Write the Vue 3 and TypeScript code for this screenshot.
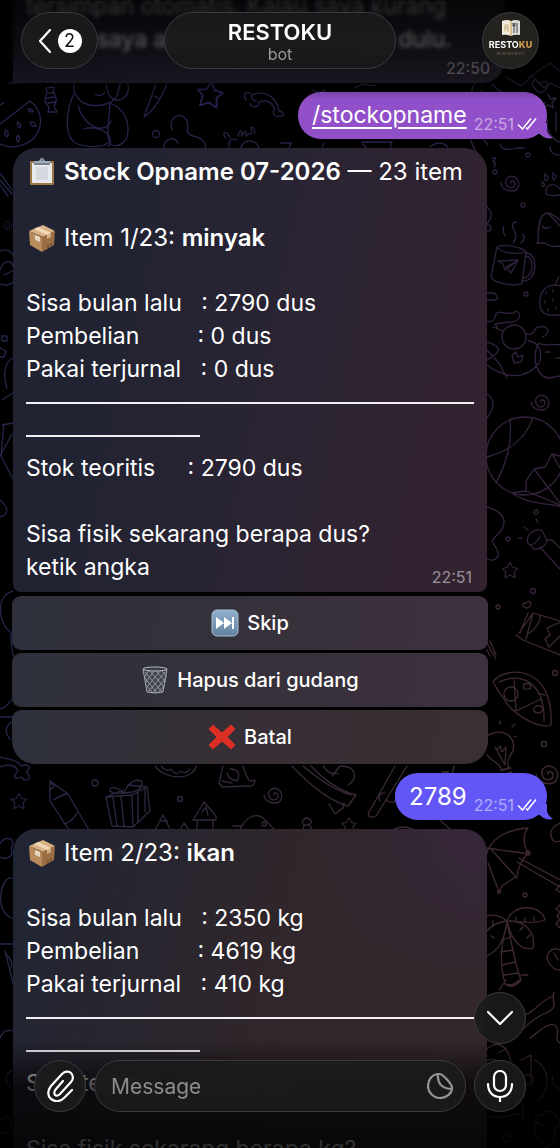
<script setup lang="ts">
import { ref } from 'vue'

interface StockRow {
  label: string
  value: string
}

interface StockItem {
  position: string
  name: string
  rows: StockRow[]
  theory: StockRow
  question: string
}

const first: StockItem = {
  position: 'Item 1/23: ',
  name: 'minyak',
  rows: [
    { label: 'Sisa bulan lalu   ', value: ': 2790 dus' },
    { label: 'Pembelian         ', value: ': 0 dus' },
    { label: 'Pakai terjurnal   ', value: ': 0 dus' },
  ],
  theory: { label: 'Stok teoritis     ', value: ': 2790 dus' },
  question: 'Sisa fisik sekarang berapa dus?',
}

const second: StockItem = {
  position: 'Item 2/23: ',
  name: 'ikan',
  rows: [
    { label: 'Sisa bulan lalu   ', value: ': 2350 kg' },
    { label: 'Pembelian         ', value: ': 4619 kg' },
    { label: 'Pakai terjurnal   ', value: ': 410 kg' },
  ],
  theory: { label: 'Stok teoritis     ', value: ': 6559 kg' },
  question: 'Sisa fisik sekarang berapa kg?',
}

const draft = ref('')
</script>

<template>
  <div class="screen">
    <svg class="doodles" viewBox="0 0 560 1148" preserveAspectRatio="xMidYMin slice" aria-hidden="true">
      <defs>
        <linearGradient id="ink" gradientUnits="userSpaceOnUse" x1="0" y1="100" x2="560" y2="500">
          <stop offset="0" stop-color="#25234f" />
          <stop offset=".55" stop-color="#2b2040" />
          <stop offset="1" stop-color="#36223c" />
        </linearGradient>
        <linearGradient id="inkLow" gradientUnits="userSpaceOnUse" x1="0" y1="800" x2="560" y2="900">
          <stop offset="0" stop-color="#24264a" />
          <stop offset=".4" stop-color="#35283a" />
          <stop offset="1" stop-color="#40282f" />
        </linearGradient>
        <path id="star" d="M0-9 3-3 9-2 5 2 6 9 0 6-6 9-5 2-9-2-3-3Z" />
        <path id="spiral" d="M1 0c-2-3 4-3 4 1s-7 6-9 0 5-10 10-6 3 13-4 13-11-4-11-8" />
      </defs>
      <g fill="none" stroke="url(#ink)" stroke-width="1.3" stroke-linecap="round" stroke-linejoin="round">
        <path d="M0 124 30 101c8 6 12 14 10 25-4 18-24 25-40 18M28 109q5 0 5 3-5 0-5-3M18 122q4 3 2 6-4-2-2-6M30 122q5-1 6 4-5 1-6-4M6 130q4 3 1 7-4-3-1-7M18 135q3 4 0 7-3-3 0-7M0 105q6-4 2-1" />
        <path d="M46 88l8-1-1 5q6 7 1 14l3 6h-9l1-5q-7-6-2-14zM48 93h6M47 98l8-1M48 103l7-1" />
        <path d="M74 84c-2 8 4 18 15 21 14 2 27-2 29-13l2-8M74 94c-8 16-10 40 0 48 10 6 26 6 34 1M84 129c12-4 24 3 26 9s0 7-2 8M110 103c12 5 18 14 18 27s-9 17-16 15-3-24-2-42M95 94q6 4 10-2M106 84c2 16 10 18 16 15q8-4 6-15M78 106c6 20 26 30 33 15" />
        <path d="M156 84l-12 33c8-5 16-16 23-33M154 96l4 2" />
        <use href="#star" stroke="#262150" transform="translate(210 94) rotate(8) scale(1.4)" />
        <path d="M246 100c-5-7 2-10 6-5 14-6 25 3 27 16 6 1 6 6 0 5-6 2-7-5-4-6-3-8-8-11-16-8 0 5-6 7-9 2M252 95q-1 5 4 6" />
        <circle cx="156" cy="134" r="3.5" />
        <path d="M164 148c0-10 10-12 14-5M172 130c-4-12 7-18 13-12 8 8-4 14 8 18 10 2 14 8 12 12M226 138c-6-6 2-8 4 0M229 147c-1-8 4-9 8-7M238 136q3-10 4 0 4-9 4 0 3-3 4-2 3 0 1-6 3-3 4 5M241 148c2-10 15-9 18 0" />
        <path d="M313 90q6 5 12 0M355 88c10-8 14 0 20-3M475 82c-10 20 0 40 10 56M482 90c-7 12 0 22 6 30M492 84c10 12 20 12 36 10M506 77l15 9 11-10 12 12 7-5 9 5M540 84c-7-9-13 1 0 9 12-4 9-17 0-9M548 94l2 5 6-1-4 5 1 5-5-3-5 3 2-6M530 77l20-14 10 8M548 120c-4 7 4 20 12 22M556 113v18" />
        <path d="M280 143h11l-2 5M324 143l-2 5M362 142h30l-2 6M363 144l3 4M430 147q10-8 18 0M500 144q2 8 16 4h8M550 147q0 8 10 8" />
        <circle cx="528" cy="155" r="2" /><circle cx="495" cy="172" r="2" /><circle cx="523" cy="205" r="2" />
        <path d="M471 140q2 10 12 20M484 140l4 5M492 158h4l-3 4q4 1 1 5" />
        <use href="#spiral" stroke="#33203f" transform="translate(510 183)" />
        <path d="M547 187c5-5 12-1 13 2M547 187c-4 8 1 10 13 8M542 182q4 2 2 4t-2-4M545 174q5 3 2 6t-2-6M553 173q5 3 2 6t-2-6" />
        <path d="M538 242c0-14 1-28 9-29 6 0 8 4 13 7M536 243h9c5 4 10 4 15 3M542 226q3 4 8 1M548 213l12 13" />
        <path d="M487 207c8 7 3 13 0 17 6 2 5 8 0 7" />
        <path d="M497 247c5-4 25 0 29 5l-4 31c-5 4-28 1-31-6zM497 247c4 6 21 8 29 5M526 256c10 2 7 22-3 22M526 253c13 0 12 29-4 28M498 261l20-1-7 13-5-6 11-6-12 9-2-6z" />
        <path d="M505 236q-3-5-1-10M513 243q5-6 1-13t2-8M521 243q5-4 2-9M487 293h7q7 6 0 7h-7" />
        <circle cx="526" cy="294" r="2" />
        <path d="M560 286c-10-3-17 1-20 12-2 11 3 18 13 17h7M546 292v2M553 290v2M545 301v2M553 299v2M548 309v2M556 307v2M555 285l4-8" />
        <circle cx="514" cy="337" r="12" />
        <path d="M487 321c6 2 8-2 9-7s17 3 20-3c8 3 2 12-7 11l-14 2 3 5M493 327l10 4M487 342c7 2 14 5 10 11-5 3-8 6-10 7M487 365c20 15 40 14 52-2 5-12-2-22-11-22M526 334c10 2 7-6 12-7 12-2 12 6 5 10M539 343c-8 13-3 34 10 35l11-2M539 343c5 4 13 0 21 2M545 352h5M556 358h4M512 355l4-3 2 5 5-2-2 7-7 1zM487 350l12 13 8 15" />
        <use href="#spiral" stroke="#36223c" transform="translate(540 402)" />
        <path d="M487 394q12 8 0 24" />
        <circle cx="525" cy="456" r="39" />
        <path d="M510 419c2 20-2 42-14 64M533 418c-8 22-24 33-46 39M512 493l14-2 0-10 8-12 11-2 7-13 8 2M526 491l34 14M534 469l26 34M552 454l8 14M512 493c10 8 24 10 48 13" />
        <circle cx="536" cy="512" r="2" /><circle cx="508" cy="539" r="2" /><circle cx="533" cy="591" r="2.5" />
        <path d="M487 507c19 5 21 17 11 27-10 9-4 8-1 16 4 8-3 12-10 9M528 543c-3-7 7-16 14-12l5 9c-1 6-8 10-13 9zM531 545q6-2 9-9M540 547l20 22M547 540c8-1 9 6 13 8M524 527l4 3M536 519l2 4M519 538h3" />
        <use href="#star" stroke="#36223c" transform="translate(510 570) scale(.85)" />
      </g>
      <g fill="none" stroke="url(#inkLow)" stroke-width="1.3" stroke-linecap="round" stroke-linejoin="round">
        <circle cx="498" cy="607" r="2" /><circle cx="555" cy="673" r="2.5" /><circle cx="544" cy="744" r="2.5" />
        <path d="M526 603c5-5 7 3 1 5-6-1-5-5-1-5M519 633l14-20 27 8M516 635l7 5 37 15M528 613l-8 20M533 613l-7 26M540 615c1 8-7 16-12 19M560 622l-13 6 3 7-5 4 4 8 11-11M487 643l9 16M490 641l6 14M487 650l3 6" />
        <path d="M493 682c11-16 61-19 58 43-10 4-32-7-43-20-6-9-10-14-15-23zM499 682c22-10 46 0 45 39M514 679l2 32 25-12M524 684q7-2 7 4-9 4-7-4M536 706c10-2 7 8 2 7-6-1-5-5-2-7M538 693l7 2" />
        <circle cx="511" cy="694" r="7" />
        <path d="M487 736c18-12 34 6 23 20-4 6-2 9-1 12l-8 2c0-7-9-8-14-15M495 747l10 18 1-18-4 5-2-6-3 4M503 770l8-2M502 775l9-3q1 5-4 8l-4-3M500 724v-3M512 727l3-3M514 737l3-1" />
        <use href="#spiral" stroke="#3c2730" transform="translate(547 774) scale(1.2)" />
        <path d="M0 757c8 2 18 3 21 9 8-3 11 2 5 6 7 6 1 12-5 5-6 3-9 0-3-6-3-7-11-7-18-4" />
        <use href="#star" stroke="#252648" transform="translate(19 801) scale(.85)" />
        <path d="M50 781l18 13 21 36M50 781v20l19 29M51 789l5-4M53 800c6-3 10-6 15-6M64 824c5-1 9-4 13-11M50 781l3 4" />
        <circle cx="95" cy="783" r="3" /><circle cx="180" cy="799" r="2.5" />
        <path d="M106 797l26-2 15-8 3 24-17 16-21-1zM132 795l1 31M113 798l4 28M121 797l3 29M138 793v29M145 789v23M124 793c-9 1-16-1-14-4s9-1 14 4c5-14 15-14 18-11 1 8-7 10-18 11M106 797l17-7M128 785l19 2" />
        <path d="M155 766c10 14 38 15 41 0M161 766q6 7 10 3 5 8 9 2 6 4 10-2M223 766l-4 17 3 4 25-1q8 1 8-6-6 3-8-3l-4-11M230 769c8 0 11 5 7 12-5-1-9-3-10-8M222 781l10 2" />
        <use href="#spiral" stroke="#36283a" transform="translate(273 795)" />
        <path d="M195 817l9-15 12 14v4h-23zM197 821v10M213 821v10M202 812l4-5 2 8M155 830l8-15 8 16M160 821h8M180 830l4-7 5 7M240 830c5-13 17-19 25-10l11 11M241 826h-8" />
        <circle cx="264" cy="824" r="2" />
        <path d="M292 766c17 18 37 35 56 40l8-11c-16-4-32-15-45-29M303 766c14 12 31 24 48 29M329 804l6 10 8-6 1-5M323 766c5 7 10 9 15 7M341 766c16 0 17 14 7 19M332 776l8-10M407 766l-31 50q-6 3-8-2l27-48M386 800q12 8 10-10M385 792q-9 3-5 9M454 766l-2 9M442 772h6v5" />
        <path d="M302 822q5-8 10 0l-4 3h-4zM304 825l-1 6M310 825l2 6M392 831q10-8 24 0M440 820l12 11" />
        <use href="#star" stroke="#3a2833" transform="translate(349 825) scale(.8)" />
        <path d="M560 823q-11 5-9 13t9 5M487 853c3-12 16-23 41-25-7 9-4 18 1 26l-42-6M490 848l27 30M488 863l11 29 3-6 15-10q2-14 11-23M517 862l43 25M519 858l41 22M560 885l-4 5 4 2" />
        <circle cx="499" cy="892" r="1.5" /><circle cx="525" cy="895" r="2" /><circle cx="528" cy="853" r="2" />
        <path d="M487 916c7-2 15 0 20 5 5-17 34-18 38-1-11 4-24 2-36 1 17 0 27 12 24 27-9 3-21-4-26-27-8 1-16 5-20 10M487 956c11-5 18-16 20-35M506 927c-6 22-6 38-1 57q8 6 16-4c-6-15-9-36-13-53M502 940l9-3M501 952l12-2M502 965l14-3M504 975l15-2M507 984q5 3 12-4M499 990l7-10M521 975h7M516 917v4M525 918v4M534 917v4M520 930l3-3M527 938l3-3M493 921v4M491 936l3 2" />
        <path d="M560 950c-9-4-16 5-11 13s9 7 11 7M554 953l4 7M560 905l-4 4 4 3-3 4 3 3-4 5 4 4" />
        <path d="M554 992c-3 12 5 14-6 20-13 5-21 13-30 22M530 1038c11-8 19-17 26-12 5 8-3 13 4 17M515 1018c18-2 24-17 38-22M487 1049c13-11 22 0 24 14M498 1053l8-4M487 1060c15-2 20 6 14 16M521 1060l10-5v28M535 1060c14 8 17 28 3 41M519 1098l4 8v13M490 1116c10 5 22-3 28-2M553 1076q-4 8 7 13" />
        <circle cx="507" cy="1138" r="4" /><circle cx="528" cy="1080" r="5" />
        <path d="M544 1125c-10 2-12-12-1-10 3-6 14-4 13 2 6 2 5 11-2 11 3 10-2 20-10 20M538 1122c-6 5-4 19 6 21" />
        <path d="M0 173l12 17M0 180l12 14M0 185l8 11" />
        <use href="#spiral" stroke="#25234f" transform="translate(7 225) scale(.55)" />
        <path d="M0 251c6-3 12 0 14 6M0 270c5-12 12-9 13-4M0 284c5 2 10 1 13-2M4 275l8-4M2 336h5v5H2zM2 400l11-7M0 348l6 3-2 6H0M13 358c-9 4-10 18-6 30M2 425l11-2M4 424l-3 32 12 23M12 434L0 456M0 500c9 8 9 14 0 17M13 591c-18 5-15 32-2 42 0 9 1 22 4 25M0 709c7-1 9-8 13-10M0 717h13M11 722q-9 8-1 17M0 843c8-9 17-3 11 5 4 10-7 12-11 9M12 878c-12-2-18 34 0 40M0 944h13M5 951l8 32M7 955q7 8 4 12M0 1038q4-10 12-7M12 1070q-11 7-2 17M0 1121q11-10 11 3t-11 8" />
      </g>
      <path d="M13 77q0 5-7 6 8 3 13 0" fill="#171622" />
    </svg>

    <main class="thread">
      <article class="bubble incoming previous">
        <p class="line">tersimpan otomatis. Kalau saya kurang</p>
        <p class="line">yakin, saya akan minta konfirmasi dulu.</p>
        <time class="stamp">22:50</time>
      </article>

      <article class="bubble outgoing violet">
        <a class="command" href="#stockopname">/stockopname</a>
        <time>22:51</time>
        <svg class="ticks" viewBox="0 0 20 13" aria-hidden="true"><path d="M1 7.500 5.500 12 14 1.500M9 10.500 10.500 12 19 1.500" /></svg>
        <svg class="tail" viewBox="0 0 18 16" aria-hidden="true"><path d="M12 0v6c0 4 3 7 6 9-5 1-9 0-12-3L0 8V0Z" /></svg>
      </article>

      <article class="bubble incoming card">
        <p class="line heading">
          <svg class="emoji" viewBox="0 0 28 28" aria-hidden="true">
            <rect x="2" y="3" width="24" height="24" rx="1" fill="#9b7849" />
            <path d="M4 5h20v20H4z" fill="#e8e9ed" />
            <path d="M8 9h12v13H8z" fill="#d5d8de" />
            <path d="M6 6V3h5q1-3 3-3t3 3h5v3z" fill="#a3adba" />
            <path d="M6 5h16v2H6z" fill="#778492" /><circle cx="14" cy="2" r="1" fill="#53606d" />
          </svg>
          <span><strong>Stock Opname 07-2026</strong> — 23 item</span>
        </p>
        <p class="line"></p>
        <p class="line heading">
          <svg class="emoji" viewBox="0 0 28 28" aria-hidden="true">
            <path d="M1 7 15 1l12 6-12 6Z" fill="#d9b184" /><path d="M1 7l13 6v15L2 21Z" fill="#b98b5c" /><path d="M14 13l13-6-1 14-12 7Z" fill="#9a6d42" />
            <path d="M6 5l4-2 13 6-4 2Z" fill="#f0d8b6" /><path d="M19 11l4-2v4l-4 2Z" fill="#d5af82" /><path d="M7 11l5 2v5l-5-2Z" fill="#e7d7c3" /><path d="M20 21v3M23 19v3" stroke="#5d4029" />
          </svg>
          <span>{{ first.position }}<strong>{{ first.name }}</strong></span>
        </p>
        <p class="line"></p>
        <p v-for="row in first.rows" :key="row.label" class="line">{{ row.label }}{{ row.value }}</p>
        <hr class="rule">
        <hr class="rule short">
        <p class="line">{{ first.theory.label }}{{ first.theory.value }}</p>
        <p class="line"></p>
        <p class="line">{{ first.question }}</p>
        <p class="line">ketik angka</p>
        <time class="stamp">22:51</time>
      </article>

      <div class="actions">
        <button type="button">
          <svg class="emoji" viewBox="0 0 28 28" aria-hidden="true">
            <defs><linearGradient id="skip" x2="0" y2="1"><stop stop-color="#91b0cc" /><stop offset="1" stop-color="#61819f" /></linearGradient></defs>
            <rect x="1" y="1" width="26" height="26" rx="5" fill="url(#skip)" stroke="#a9c0d5" />
            <path d="M5 8l8 6-8 6ZM13 8l8 6-8 6ZM21 8h2v12h-2Z" fill="#fff" />
          </svg>
          <span>Skip</span>
        </button>
        <button type="button">
          <svg class="emoji" viewBox="0 0 28 28" aria-hidden="true">
            <path d="M2 3h24l-4 23q-8 3-16 0Z" fill="#41444a" />
            <path d="M4 6l17 20M8 4l15 17M14 4l11 12M20 4l6 7M4 12l12 15M6 20l6 7M24 6L7 26M20 4L6 21M14 4L5 16M8 4l-4 7M25 12L12 27M23 20l-6 7" fill="none" stroke="#9a9fa6" stroke-width=".9" />
            <ellipse cx="14" cy="3" rx="12" ry="2" fill="#393c42" stroke="#b7bbc0" /><path d="M6 26q8 2 16 0M2 3l4 23M26 3l-4 23" fill="none" stroke="#a5aab0" />
          </svg>
          <span>Hapus dari gudang</span>
        </button>
        <button type="button">
          <svg class="emoji" viewBox="0 0 28 28" aria-hidden="true"><path d="M5 2 14 10 23 2l4 4-8 8 8 8-4 4-9-8-9 8-4-4 8-8-8-8Z" fill="#dc2f24" stroke="#dc2f24" stroke-linejoin="round" /></svg>
          <span>Batal</span>
        </button>
      </div>

      <article class="bubble outgoing indigo">
        <span>2789</span>
        <time>22:51</time>
        <svg class="ticks" viewBox="0 0 20 13" aria-hidden="true"><path d="M1 7.500 5.500 12 14 1.500M9 10.500 10.500 12 19 1.500" /></svg>
        <svg class="tail" viewBox="0 0 18 16" aria-hidden="true"><path d="M12 0v6c0 4 3 7 6 9-5 1-9 0-12-3L0 8V0Z" /></svg>
      </article>

      <article class="bubble incoming card warm">
        <p class="line heading">
          <svg class="emoji" viewBox="0 0 28 28" aria-hidden="true">
            <path d="M1 7 15 1l12 6-12 6Z" fill="#d9b184" /><path d="M1 7l13 6v15L2 21Z" fill="#b98b5c" /><path d="M14 13l13-6-1 14-12 7Z" fill="#9a6d42" />
            <path d="M6 5l4-2 13 6-4 2Z" fill="#f0d8b6" /><path d="M19 11l4-2v4l-4 2Z" fill="#d5af82" /><path d="M7 11l5 2v5l-5-2Z" fill="#e7d7c3" /><path d="M20 21v3M23 19v3" stroke="#5d4029" />
          </svg>
          <span>{{ second.position }}<strong>{{ second.name }}</strong></span>
        </p>
        <p class="line"></p>
        <p v-for="row in second.rows" :key="row.label" class="line">{{ row.label }}{{ row.value }}</p>
        <hr class="rule">
        <hr class="rule short">
        <p class="line">{{ second.theory.label }}{{ second.theory.value }}</p>
        <p class="line"></p>
        <p class="line">{{ second.question }}</p>
        <p class="line">ketik angka</p>
      </article>
    </main>

    <header class="topbar">
      <button type="button" class="glass back" aria-label="Back, 2 unread">
        <svg viewBox="0 0 14 26" aria-hidden="true"><path d="M12 2 2 13l10 11" /></svg>
        <span class="count">2</span>
      </button>
      <button type="button" class="glass title">
        <span class="name">RESTOKU</span>
        <span class="kind">bot</span>
      </button>
      <button type="button" class="glass avatar" aria-label="Profile">
        <svg class="menu" viewBox="0 0 20 18" aria-hidden="true">
          <path d="M1 2q5-2 9 0v15q-5-2-9-1Z" fill="#f4ead5" /><path d="M10 2q5-2 9 0v14q-5-1-9 1Z" fill="#dcdcda" />
          <path d="M10 2v15" stroke="#cc9c4c" /><path d="M4 6v6M4 6h3v3H4M7 9v4" fill="none" stroke="#b89a62" stroke-width=".8" /><path d="M13 4v10M16 4v10M12 4v3h2V4" fill="none" stroke="#333" stroke-width=".9" />
        </svg>
        <span class="brand">RESTO<b>KU</b></span>
        <span class="tagline">AKUNTANSI RESTO</span>
      </button>
    </header>

    <footer class="composer">
      <button type="button" class="glass round" aria-label="Attach file">
        <svg viewBox="0 0 28 32" aria-hidden="true"><path d="M26 20l-8 8c-4 4-9 4-13 1-4-4-3-9 0-13L16 4c3-3 7-3 9-1s3 6 0 9L14 24c-2 2-4 2-5 1s-1-4 1-6l7-8" /></svg>
      </button>
      <div class="glass field">
        <input v-model="draft" type="text" placeholder="Message" aria-label="Message">
        <button type="button" class="sticker" aria-label="Stickers">
          <svg viewBox="0 0 26 26" aria-hidden="true"><path d="M12 1C5 1 1 7 1 13s5 12 12 12 12-5 12-10c0-4-9-14-13-14ZM11 1c-1 9 4 15 14 15" /></svg>
        </button>
      </div>
      <div class="voice">
        <button type="button" class="glass round latest" aria-label="Jump to latest message">
          <svg viewBox="0 0 28 32" aria-hidden="true"><path d="M2 10l12 12 12-12" /></svg>
        </button>
        <button type="button" class="glass round" aria-label="Record voice message">
          <svg viewBox="0 0 28 32" aria-hidden="true"><rect x="8" y="1" width="12" height="20" rx="6" /><path d="M2 14c0 8 5 13 12 13s12-5 12-13M14 27v5" /></svg>
        </button>
      </div>
    </footer>
  </div>
</template>

<style>
html,
body {
  background: #000;
}
</style>

<style scoped>
.screen {
  position: relative;
  height: 100vh;
  overflow: hidden;
  background: #000;
  color: #fff;
  font-family: Inter, "Liberation Sans", sans-serif;
  font-size: 24px;
  line-height: 33px;
}

.screen * {
  box-sizing: border-box;
}

button {
  margin: 0;
  padding: 0;
  border: 0;
  color: inherit;
  font: inherit;
}

.doodles {
  position: absolute;
  inset: 0;
  width: 100%;
  height: 100%;
}

.thread {
  position: relative;
  display: flex;
  flex-direction: column;
  gap: 9px;
  margin-top: -10px;
  padding: 0 13px;
}

.bubble {
  position: relative;
  flex: none;
}

.incoming {
  width: calc(100% - 60px);
  padding: 7px 13px 8px;
  border-radius: 23px 23px 8px 8px;
  background: linear-gradient(102deg, #212332 20%, #2a2433 55%, #33222f 92%);
}

.warm {
  border-radius: 23px;
  background: radial-gradient(circle at 100% 0, #35263a, transparent 30%), linear-gradient(105deg, #202534 0, #30262b 52%, #33272a 100%);
}

.previous {
  width: calc(100% - 42px);
  padding: 0 13px 27px;
  border-radius: 0 0 23px 0;
  background: linear-gradient(105deg, #232233, #2a2332);
}

.line {
  height: 33px;
  margin: 0;
  font-size: 23px;
  white-space: pre;
}

.heading {
  display: flex;
  align-items: center;
  gap: 8px;
  padding-left: 2px;
  font-size: 24px;
}

.emoji {
  flex: none;
  width: 28px;
  height: 28px;
}

strong {
  font-weight: 600;
}

.rule {
  height: 33px;
  margin: 0;
  border: 0;
  background: linear-gradient(#f2f0f4, #f2f0f4) center / 100% 2px no-repeat;
}

.short {
  width: 174px;
}

time {
  color: rgba(255, 255, 255, .5);
  font-size: 16px;
  line-height: 20px;
}

.stamp {
  position: absolute;
  right: 15px;
  bottom: 5px;
}

.outgoing {
  display: flex;
  align-self: flex-end;
  align-items: center;
  gap: 7px;
  height: 47px;
  padding: 0 10px 0 14px;
  border-radius: 23px;
}

.violet {
  background: #9150c9;
}

.indigo {
  background: #6257f6;
}

.command {
  color: #fff;
  font-size: 23px;
  text-decoration-thickness: 2px;
  text-underline-offset: 4px;
}

.outgoing time {
  align-self: flex-end;
  margin-bottom: 5px;
}

.ticks {
  align-self: flex-end;
  width: 20px;
  height: 13px;
  margin: 0 0 9px -4px;
  fill: none;
  stroke: #fff;
  stroke-width: 1.5;
}

.tail {
  position: absolute;
  right: -6px;
  bottom: 0;
  width: 18px;
  height: 16px;
}

.violet .tail {
  fill: #9150c9;
}

.indigo .tail {
  fill: #6257f6;
}

.actions {
  display: grid;
  gap: 3px;
  width: calc(100% - 58px);
  margin: -5px -1px 0;
}

.actions button {
  display: flex;
  align-items: center;
  justify-content: center;
  gap: 8px;
  height: 54px;
  border-radius: 9px;
  background: linear-gradient(100deg, #2d303b, #36313a 50%, #3d303e);
  font-size: 20px;
  font-weight: 500;
}

.actions button:last-child {
  border-radius: 9px 9px 23px 23px;
  background: linear-gradient(100deg, #2d303b, #372f35 50%, #392f35);
}

.topbar {
  position: absolute;
  inset: 0 0 auto;
  display: grid;
  grid-template-columns: 1fr auto 1fr;
  align-items: start;
  height: 100px;
  padding: 12px 21px;
  background: linear-gradient(rgba(0, 0, 0, .85), rgba(0, 0, 0, .6) 50%, rgba(0, 0, 0, .4) 80%, transparent);
}

.topbar::before {
  position: absolute;
  inset: 0 0 auto;
  height: 60px;
  backdrop-filter: blur(2px);
  content: "";
}

.glass {
  position: relative;
  border: 1px solid #3b3b3e;
  background: rgba(27, 27, 29, .9);
  backdrop-filter: blur(5px);
}

.back {
  display: flex;
  align-items: center;
  justify-content: center;
  gap: 6px;
  width: 77px;
  height: 57px;
  border-radius: 29px;
}

.back svg {
  width: 14px;
  height: 26px;
}

.back svg,
.round svg,
.sticker svg {
  fill: none;
  stroke: #fff;
  stroke-width: 2.2;
  stroke-linecap: round;
  stroke-linejoin: round;
}

.count {
  width: 24px;
  height: 24px;
  border-radius: 12px;
  background: #fff;
  color: #111;
  font-size: 18px;
  line-height: 24px;
  text-align: center;
}

.title {
  display: flex;
  flex-direction: column;
  align-items: center;
  width: 232px;
  height: 57px;
  padding-top: 6px;
  border-radius: 29px;
}

.name {
  font-size: 22px;
  font-weight: 600;
  line-height: 26px;
}

.kind {
  color: #99999c;
  font-size: 16px;
  line-height: 18px;
}

.avatar {
  display: flex;
  flex-direction: column;
  align-items: center;
  justify-self: end;
  width: 57px;
  height: 57px;
  padding-top: 6px;
  border-radius: 29px;
  background: #24221f;
}

.menu {
  width: 20px;
  height: 18px;
}

.brand {
  font-size: 9px;
  font-weight: 700;
  line-height: 16px;
}

.brand b {
  color: #c2924f;
}

.tagline {
  color: #77684f;
  font-size: 3px;
  line-height: 3px;
}

.composer {
  position: absolute;
  inset: auto 0 0;
  display: flex;
  align-items: center;
  gap: 8px;
  padding: 20px 34px 36px;
  background: linear-gradient(transparent, rgba(0, 0, 0, .68) 42%, rgba(0, 0, 0, .82));
}

.round {
  display: grid;
  flex: none;
  place-items: center;
  width: 52px;
  height: 52px;
  border-radius: 26px;
}

.round svg {
  width: 28px;
  height: 32px;
}

.field {
  display: flex;
  flex: 1;
  align-items: center;
  min-width: 0;
  height: 52px;
  padding: 0 12px 0 16px;
  border-radius: 26px;
}

.field input {
  flex: 1;
  min-width: 0;
  padding: 0;
  border: 0;
  outline: 0;
  background: none;
  color: #fff;
  font: inherit;
  font-size: 21px;
}

.field input::placeholder {
  color: #8d8c8e;
  opacity: 1;
}

.sticker {
  display: grid;
  background: none;
}

.sticker svg {
  width: 26px;
  height: 26px;
  stroke: #949395;
}

.voice {
  position: relative;
  display: grid;
}

.latest {
  position: absolute;
  right: 0;
  bottom: 68px;
}
</style>
